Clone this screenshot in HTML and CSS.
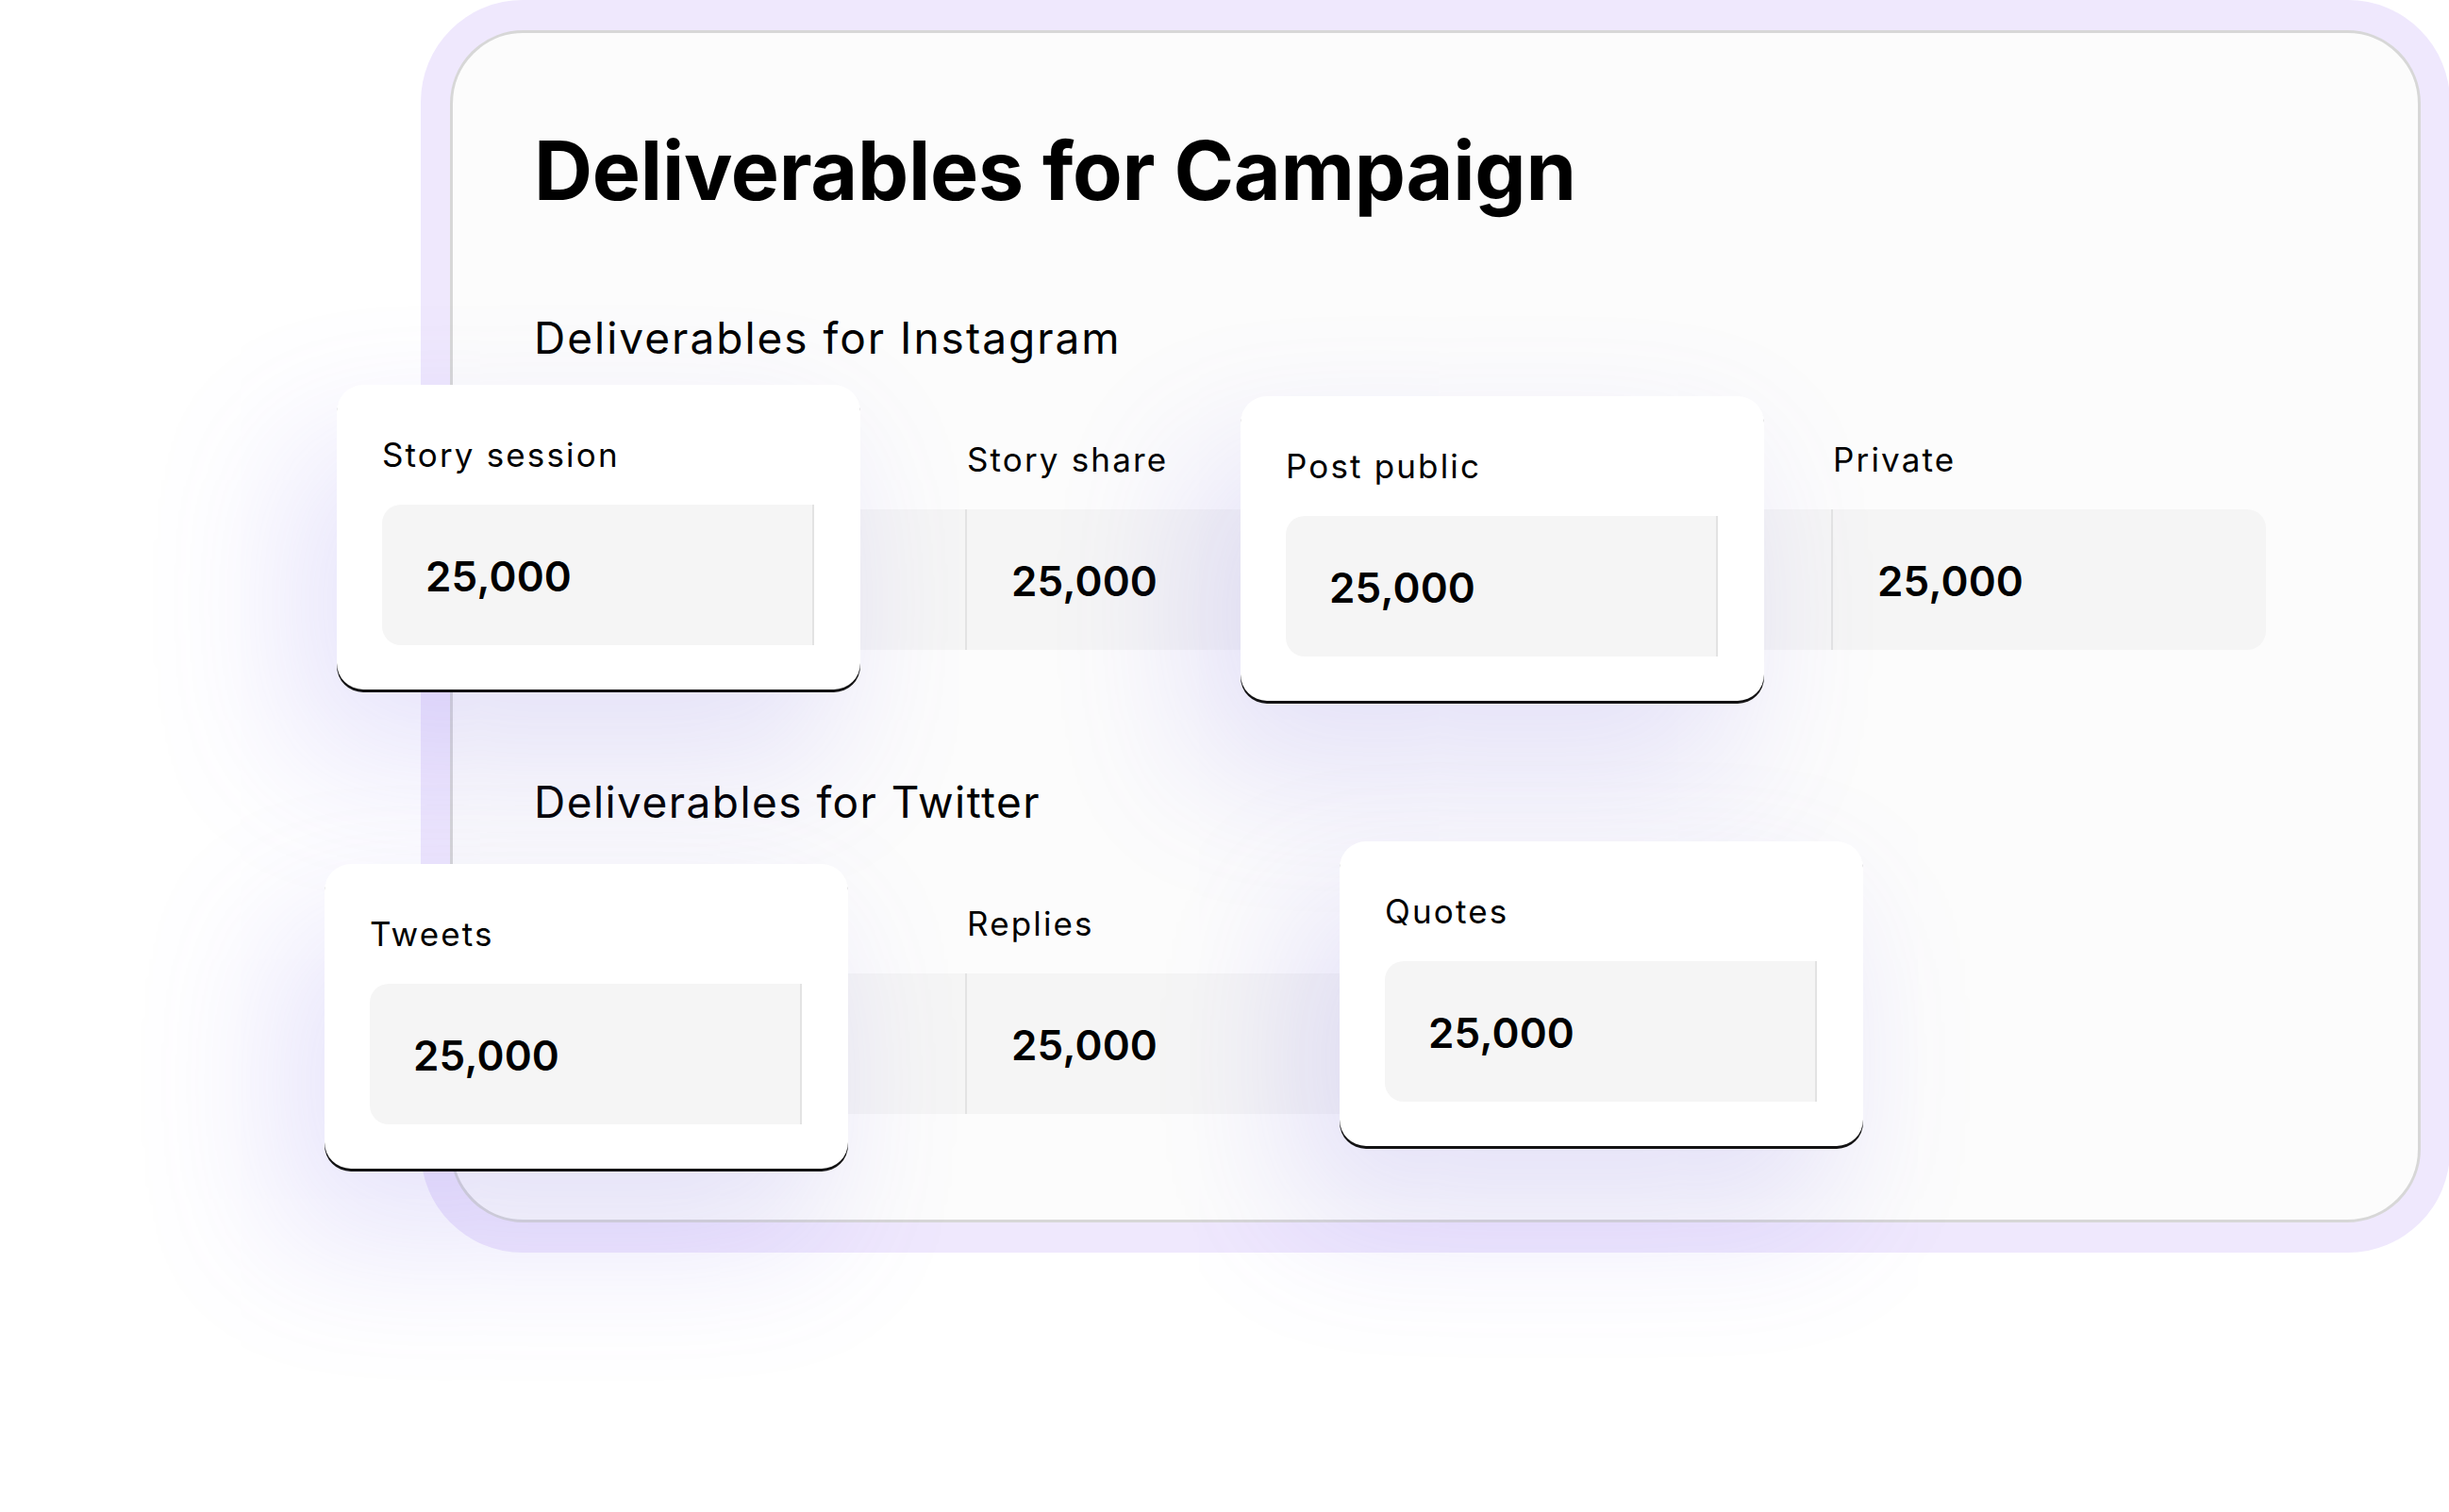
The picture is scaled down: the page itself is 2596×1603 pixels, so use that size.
FILE: index.html
```html
<!DOCTYPE html>
<html lang="en">
<head>
<meta charset="utf-8">
<title>Deliverables for Campaign</title>
<link rel="stylesheet" href="styles.css">
</head>
<body>
<div class="stage">
  <div class="frame">
    <div class="panel">
      <h1 class="title">Deliverables for Campaign</h1>

      <h2 class="section-title">Deliverables for Instagram</h2>
      <div class="strip strip-4">
        <div class="field field-slot" aria-hidden="true">
          <div class="label">&nbsp;</div>
          <div class="input input-first"></div>
        </div>
        <div class="field">
          <div class="label">Story share</div>
          <div class="input"><span class="value">25,000</span></div>
        </div>
        <div class="field field-slot" aria-hidden="true">
          <div class="label">&nbsp;</div>
          <div class="input"></div>
        </div>
        <div class="field">
          <div class="label">Private</div>
          <div class="input input-last"><span class="value">25,000</span></div>
        </div>
      </div>

      <h2 class="section-title section-title-second">Deliverables for Twitter</h2>
      <div class="strip strip-3">
        <div class="field field-slot" aria-hidden="true">
          <div class="label">&nbsp;</div>
          <div class="input input-first"></div>
        </div>
        <div class="field">
          <div class="label">Replies</div>
          <div class="input"><span class="value">25,000</span></div>
        </div>
        <div class="field field-slot" aria-hidden="true">
          <div class="label">&nbsp;</div>
          <div class="input input-last"></div>
        </div>
      </div>
    </div>
  </div>

  <div class="card card-story-session">
    <div class="label">Story session</div>
    <div class="input card-input"><span class="value">25,000</span></div>
  </div>
  <div class="card card-post-public">
    <div class="label">Post public</div>
    <div class="input card-input"><span class="value">25,000</span></div>
  </div>
  <div class="card card-tweets">
    <div class="label">Tweets</div>
    <div class="input card-input"><span class="value">25,000</span></div>
  </div>
  <div class="card card-quotes">
    <div class="label">Quotes</div>
    <div class="input card-input"><span class="value">25,000</span></div>
  </div>
</div>
</body>
</html>
```
FILE: styles.css
```css
* { box-sizing: border-box; }

html, body {
  margin: 0;
  padding: 0;
  background: #ffffff;
}

body {
  font-family: "Inter", "Noto Sans", "Liberation Sans", sans-serif;
  color: #000000;
}

.stage {
  position: relative;
  width: 2596px;
  height: 1603px;
  overflow: hidden;
  background: #ffffff;
}

/* lavender outer frame */
.frame {
  margin-left: 446px;
  width: 2151px;
  height: 1328px;
  padding: 32px 31px 32px 31px;
  background: #efe8fd;
  border-radius: 108px;
}

/* inner white panel */
.panel {
  height: 100%;
  border: 3px solid #d7d7d7;
  border-radius: 78px;
  background: #fcfcfc;
  padding: 103px 0 0 86px;
}

.title {
  margin: 0;
  font-size: 86px;
  line-height: 86px;
  font-weight: 700;
  letter-spacing: -0.25px;
}

.section-title {
  margin: 111px 0 0 0;
  font-size: 46px;
  line-height: 46px;
  font-weight: 400;
  letter-spacing: 2px;
}

.section-title-second {
  margin-top: 138px;
  letter-spacing: 1.45px;
}

.strip {
  display: grid;
  margin-top: 89px;
}

.strip-4 { grid-template-columns: repeat(4, 459px); }
.strip-3 { grid-template-columns: repeat(3, 459px); }

.field {
  display: flex;
  flex-direction: column;
}

.label {
  font-size: 35px;
  line-height: 35px;
  font-weight: 400;
  letter-spacing: 2.15px;
  white-space: nowrap;
}

.input {
  margin-top: 35px;
  height: 149px;
  display: flex;
  align-items: center;
  padding-left: 47px;
  padding-top: 2px;
  background: #f5f5f5;
  border-right: 2px solid #e3e3e3;
}

.input-first {
  border-radius: 20px 0 0 20px;
}

.input-last {
  border-right: none;
  border-radius: 0 20px 20px 0;
}

.value {
  font-size: 44px;
  line-height: 44px;
  font-weight: 600;
  letter-spacing: 0.2px;
}

/* lifted cards */
.card {
  position: absolute;
  width: 555px;
  height: 323px;
  padding: 57px 49px 47px 48px;
  background: #ffffff;
  border-radius: 28px;
  box-shadow:
    0 3px 0 rgba(0, 0, 0, 0.92),
    -40px 70px 150px 10px rgba(112, 92, 232, 0.17);
}

.card-input {
  width: 458px;
  border-radius: 20px 0 0 20px;
  padding-left: 46px;
}

.card-story-session { left: 357px; top: 408px; }
.card-post-public   { left: 1315px; top: 420px; }
.card-tweets        { left: 344px; top: 916px; }
.card-quotes        { left: 1420px; top: 892px; }
```
